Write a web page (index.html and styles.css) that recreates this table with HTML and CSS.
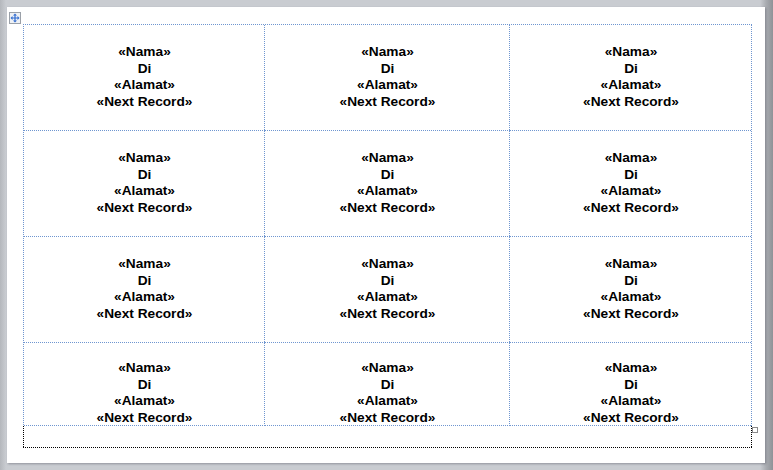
FILE: index.html
```html
<!DOCTYPE html>
<html>
<head>
<meta charset="utf-8">
<link rel="stylesheet" href="styles.css">
</head>
<body>
<div class="page">
  <div class="move-handle">
    <svg width="10" height="10" viewBox="0 0 10 10">
      <path d="M5 0.5 L7 2.5 H5.6 V4.4 H7.5 V3 L9.5 5 L7.5 7 V5.6 H5.6 V7.5 H7 L5 9.5 L3 7.5 H4.4 V5.6 H2.5 V7 L0.5 5 L2.5 3 V4.4 H4.4 V2.5 H3 Z" fill="#2f6bd0"/>
    </svg>
  </div>
  <div class="labels">
    <div class="cell"><p>«Nama»</p><p>Di</p><p>«Alamat»</p><p>«Next Record»</p></div>
    <div class="cell"><p>«Nama»</p><p>Di</p><p>«Alamat»</p><p>«Next Record»</p></div>
    <div class="cell"><p>«Nama»</p><p>Di</p><p>«Alamat»</p><p>«Next Record»</p></div>
    <div class="cell"><p>«Nama»</p><p>Di</p><p>«Alamat»</p><p>«Next Record»</p></div>
    <div class="cell"><p>«Nama»</p><p>Di</p><p>«Alamat»</p><p>«Next Record»</p></div>
    <div class="cell"><p>«Nama»</p><p>Di</p><p>«Alamat»</p><p>«Next Record»</p></div>
    <div class="cell"><p>«Nama»</p><p>Di</p><p>«Alamat»</p><p>«Next Record»</p></div>
    <div class="cell"><p>«Nama»</p><p>Di</p><p>«Alamat»</p><p>«Next Record»</p></div>
    <div class="cell"><p>«Nama»</p><p>Di</p><p>«Alamat»</p><p>«Next Record»</p></div>
    <div class="cell last"><p>«Nama»</p><p>Di</p><p>«Alamat»</p><p>«Next Record»</p></div>
    <div class="cell last"><p>«Nama»</p><p>Di</p><p>«Alamat»</p><p>«Next Record»</p></div>
    <div class="cell last"><p>«Nama»</p><p>Di</p><p>«Alamat»</p><p>«Next Record»</p></div>
  </div>
  <div class="endmark">
    <span class="resize-handle"></span>
  </div>
</div>
</body>
</html>
```
FILE: styles.css
```css
html, body {
  margin: 0;
  padding: 0;
}
body {
  width: 773px;
  height: 470px;
  overflow: hidden;
  background: linear-gradient(to right, #b4b7bc 0px, #c9ccd1 6px, #c9ccd1 760px, #a9acb1 766px, #8f9297 773px);
  padding: 7px 0 0 7px;
  box-sizing: border-box;
  font-family: "Liberation Sans", Arial, sans-serif;
}
.page {
  position: relative;
  width: 758px;
  height: 456px;
  background: #ffffff;
  box-sizing: border-box;
  padding: 17px 0 0 16px;
  box-shadow: 1px 1px 2px rgba(80, 80, 90, 0.45);
}
.move-handle {
  position: absolute;
  left: 2px;
  top: 5px;
  width: 12px;
  height: 12px;
  box-sizing: border-box;
  border: 1px solid #9aa0a8;
  background: #eef1f5;
  display: flex;
  align-items: center;
  justify-content: center;
}
.move-handle svg {
  display: block;
}
.labels {
  display: grid;
  grid-template-columns: 241px 245px 242px;
  grid-template-rows: 106px 106px 106px 83px;
  width: 729px;
  box-sizing: border-box;
  padding: 1px 0 0 1px;
  background:
    linear-gradient(to bottom, #6f96d0 50%, transparent 50%) left top / 1px 2px repeat-y,
    linear-gradient(to right, #6f96d0 50%, transparent 50%) left top / 2px 1px repeat-x;
}
.cell {
  background:
    linear-gradient(to bottom, #6f96d0 50%, transparent 50%) right top / 1px 2px repeat-y,
    linear-gradient(to right, #6f96d0 50%, transparent 50%) left bottom / 2px 1px repeat-x;
  overflow: hidden;
  text-align: center;
  padding-top: 19px;
  font-weight: bold;
  font-size: 13.7px;
  line-height: 16.67px;
  color: #000000;
}
.cell.last {
  padding-top: 17px;
}
.cell p {
  margin: 0;
  white-space: nowrap;
}
.endmark {
  position: relative;
  width: 729px;
  height: 22px;
  box-sizing: border-box;
  background:
    linear-gradient(to bottom, #000000 50%, transparent 50%) left top / 1px 2px repeat-y,
    linear-gradient(to bottom, #000000 50%, transparent 50%) right top / 1px 2px repeat-y,
    linear-gradient(to right, #000000 50%, transparent 50%) left bottom / 2px 1px repeat-x;
}
.resize-handle {
  position: absolute;
  right: -6px;
  top: 1px;
  width: 6px;
  height: 6px;
  box-sizing: border-box;
  border: 1px solid #8a8a8a;
  background: #ffffff;
}
```
